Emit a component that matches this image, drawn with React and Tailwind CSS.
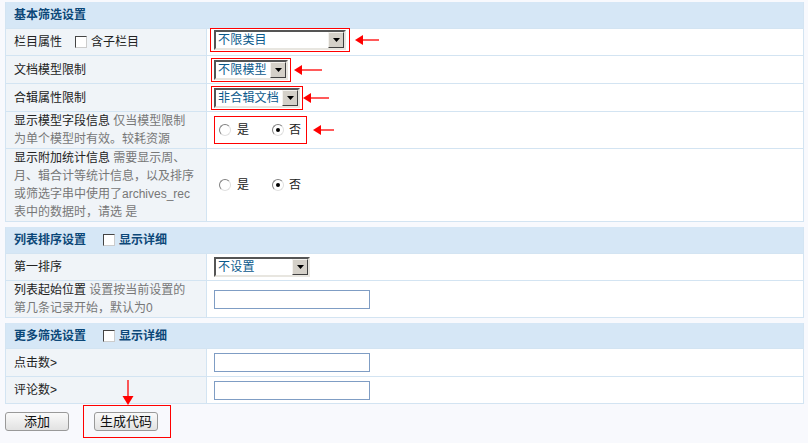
import React from "react";

const F = { fontFamily: '"Liberation Sans", "Noto Sans CJK SC", sans-serif' };

function Arrow({ w = 24 }) {
  return (
    <svg width={w} height="12" viewBox={`0 0 ${w} 12`} className="block">
      <polygon points="0,6 8,1 8,11" fill="#ff0000" />
      <line x1="7" y1="6" x2={w} y2="6" stroke="#ff0000" strokeWidth="1.3" />
    </svg>
  );
}

function Select({ w, text }) {
  return (
    <div
      className="flex h-[20px] items-stretch border-2 border-t-[#555] border-l-[#555] border-b-[#e8e6e0] border-r-[#e8e6e0] bg-white"
      style={{ width: w }}
    >
      <div className="flex flex-1 items-center overflow-hidden whitespace-nowrap pl-[2px] text-[12px] leading-none tracking-[0.2px] text-[#0b5a8c]">{text}</div>
      <div className="flex w-[16px] shrink-0 items-center justify-center border border-t-[#f4f2ee] border-l-[#f4f2ee] border-b-[#404040] border-r-[#404040] bg-[#d4d0c8]">
        <svg width="7" height="4" viewBox="0 0 7 4"><polygon points="0,0 7,0 3.5,4" fill="#000" /></svg>
      </div>
    </div>
  );
}

function Radio({ on }) {
  return (
    <span className="relative inline-block h-[12px] w-[12px] rounded-full border border-t-[#808080] border-l-[#808080] border-b-[#e0e0e0] border-r-[#e0e0e0] bg-white">
      {on && <span className="absolute left-[3px] top-[3px] h-[4px] w-[4px] rounded-full bg-black" />}
    </span>
  );
}

function Radios() {
  return (
    <div className="flex items-center text-[12px] text-[#222]">
      <Radio />
      <span className="ml-[6px]">是</span>
      <span className="ml-[23px] flex"><Radio on /></span>
      <span className="ml-[5px]">否</span>
    </div>
  );
}

function Checkbox() {
  return <span className="inline-block h-[12px] w-[12px] border border-t-[#444] border-l-[#444] border-b-[#ccc] border-r-[#ccc] bg-white" />;
}

function Header({ title, check, h = 27 }) {
  return (
    <div
      className="flex items-center border-b border-[#d3e4f2] bg-[#d6e7f6] pl-[8px] text-[12px] font-bold text-[#0c4778]"
      style={{ height: h }}
    >
      <span>{title}</span>
      {check && (
        <span className="ml-[17px] flex items-center gap-[4px]">
          <Checkbox />
          <span>显示详细</span>
        </span>
      )}
    </div>
  );
}

function Row({ h = 27, label, children }) {
  return (
    <div className="grid grid-cols-[201px_1fr] border-b border-[#d3e4f2]" style={{ height: h }}>
      <div className="flex items-center border-r border-[#d3e4f2] bg-[#f0f4f8] pl-[8px] pr-[9px] text-[12px] leading-[18px] text-[#222]">
        {label}
      </div>
      <div className="flex items-center bg-white pl-[7px]">{children}</div>
    </div>
  );
}

function Input() {
  return <div className="h-[19px] w-[156px] border border-[#7f9dc4] bg-white" />;
}

function Btn({ children }) {
  return (
    <button className="flex h-[19px] w-[64px] items-center justify-center rounded-[3px] border border-[#999] bg-gradient-to-b from-[#fafafa] to-[#e2e2e2] text-[13px] leading-none text-[#111]">
      {children}
    </button>
  );
}

export default function App() {
  return (
    <div className="min-h-[443px] w-[808px] bg-[#f8f9fd] pl-[5px] pr-[4px] pt-[2px]" style={F}>
      <div className="border-x border-[#d3e4f2]">
        <Header title="基本筛选设置" />
        <Row label={<span className="flex items-center">栏目属性<span className="ml-[13px] mr-[4px] flex"><Checkbox /></span>含子栏目</span>}>
          <div className="-ml-[4px] -mt-[4px] flex items-center">
            <div className="border border-[#ff0000] px-[3px] py-[1px]"><Select w={132} text="不限类目" /></div>
            <div className="ml-[5px]"><Arrow w={24} /></div>
          </div>
        </Row>
        <Row h={28} label="文档模型限制">
          <div className="-ml-[3px] flex items-center">
            <div className="border border-[#ff0000] px-[2px] py-[1px]"><Select w={74} text="不限模型" /></div>
            <div className="ml-[3px]"><Arrow w={28} /></div>
          </div>
        </Row>
        <Row h={28} label="合辑属性限制">
          <div className="-ml-[3px] flex items-center">
            <div className="border border-[#ff0000] px-[2px] py-[1px]"><Select w={86} text="非合辑文档" /></div>
            <div className="ml-[0px]"><Arrow w={26} /></div>
          </div>
        </Row>
        <Row h={37} label={<span>显示模型字段信息 <span className="text-[#777]">仅当模型限制为单个模型时有效。较耗资源</span></span>}>
          <div className="flex items-center">
            <div className="border border-[#ff0000] py-[4px] pl-[4px] pr-[3px]"><div className="w-[84px]"><Radios /></div></div>
            <div className="ml-[6px]"><Arrow w={21} /></div>
          </div>
        </Row>
        <Row h={73} label={<span>显示附加统计信息 <span className="text-[#777]">需要显示周、月、辑合计等统计信息，以及排序或筛选字串中使用了archives_rec表中的数据时，请选 是</span></span>}>
          <div className="pl-[5px]"><Radios /></div>
        </Row>
      </div>

      <div className="mt-[5px] border-x border-[#d3e4f2]">
        <Header title="列表排序设置" check />
        <Row label="第一排序">
          <Select w={96} text="不设置" />
        </Row>
        <Row h={37} label={<span>列表起始位置 <span className="text-[#777]">设置按当前设置的第几条记录开始，默认为0</span></span>}>
          <Input />
        </Row>
      </div>

      <div className="mt-[5px] border-x border-[#d3e4f2]">
        <Header title="更多筛选设置" check h={26} />
        <Row h={28} label="点击数>">
          <Input />
        </Row>
        <Row h={27} label="评论数>">
          <Input />
        </Row>
      </div>

      <div className="relative mt-[1px] flex items-center">
        <Btn>添加</Btn>
        <div className="ml-[14px] flex h-[33px] items-center border border-[#ff0000] pl-[10px] pr-[12px]">
          <Btn>生成代码</Btn>
        </div>
        <svg width="12" height="25" viewBox="0 0 12 25" className="absolute left-[117px] top-[-25px]">
          <line x1="6" y1="0" x2="6" y2="18" stroke="#ff0000" strokeWidth="1.3" />
          <polygon points="0.5,16 11.5,16 6,25" fill="#ff0000" />
        </svg>
      </div>
    </div>
  );
}
